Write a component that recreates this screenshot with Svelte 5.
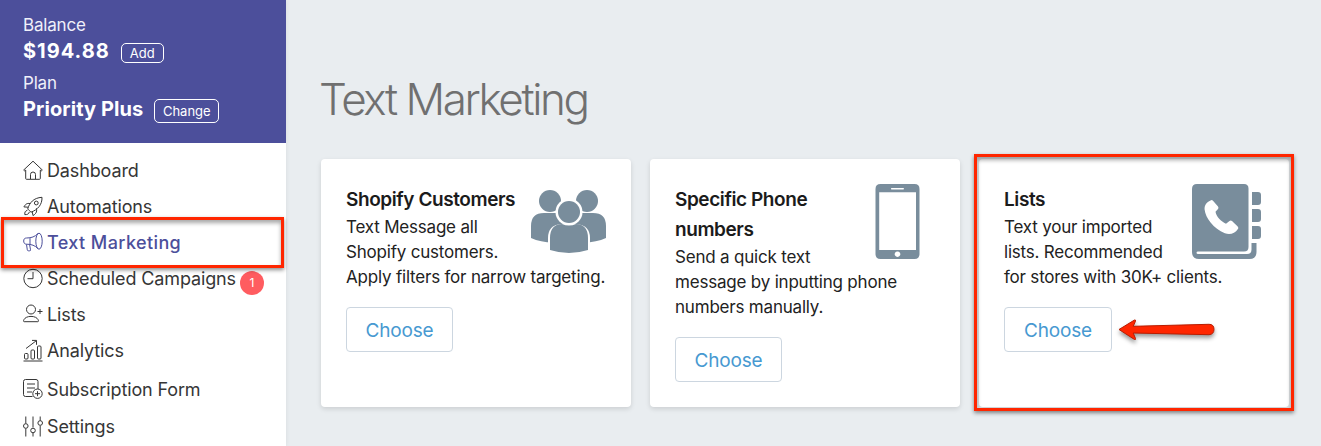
<script>
	/** @type {{ label: string, icon: string, active?: boolean, badge?: number }[]} */
	const NAV = [
		{ label: 'Dashboard', icon: 'home' },
		{ label: 'Automations', icon: 'rocket' },
		{ label: 'Text Marketing', icon: 'megaphone', active: true },
		{ label: 'Scheduled Campaigns', icon: 'clock', badge: 1 },
		{ label: 'Lists', icon: 'user' },
		{ label: 'Analytics', icon: 'chart' },
		{ label: 'Subscription Form', icon: 'form' },
		{ label: 'Settings', icon: 'sliders' }
	];

	const CARDS = [
		{
			icon: 'people',
			title: ['Shopify Customers'],
			text: ['Text Message all', 'Shopify customers.', 'Apply filters for narrow targeting.']
		},
		{
			icon: 'phone',
			title: ['Specific Phone', 'numbers'],
			text: ['Send a quick text', 'message by inputting phone', 'numbers manually.']
		},
		{
			icon: 'book',
			title: ['Lists'],
			text: ['Text your imported', 'lists. Recommended', 'for stores with 30K+ clients.'],
			marked: true
		}
	];
</script>

<div class="app">
	<aside class="sidebar">
		<div class="account">
			<div class="caption">Balance</div>
			<div class="line balance"><strong>$194.88</strong><button class="pill">Add</button></div>
			<div class="caption plan-caption">Plan</div>
			<div class="line plan"><strong>Priority Plus</strong><button class="pill big">Change</button></div>
		</div>

		<nav>
			{#each NAV as item}
				<a class="item {item.icon}" class:active={item.active} href="#top">
					<svg class="icon" viewBox="0 0 20 22" aria-hidden="true">
						{#if item.icon === 'home'}
							<path d="M.7 11 10 2.2l9.3 8.8-1 .9-1-.8v8.4q0 .8-.8.8H3.5q-.8 0-.8-.8v-8.4l-1 .8zM7.5 20v-4.5a2.5 2.5 0 0 1 5 0V20" />
						{:else if item.icon === 'rocket'}
							<path d="M6.2 15.5 4.7 14C6.4 8 10.4 2.8 19 2.3c.3 7.500-4.500 12.500-11 14.900zM7.200 8.600C3.500 7.700 2 10 .9 11.900l4.200.3M13.400 13.300c1 4-1 5.800-3.400 7.300l-.8-4M4.300 15.500C2.300 15.500 1.500 17.500 1.800 19.600c2.200.2 4.200-.5 4.500-2.600" />
							<circle cx="13.300" cy="8" r="1.900" />
						{:else if item.icon === 'megaphone'}
							<path d="M15 2.500C12 5.700 8.500 7 3.500 7 1.500 7 .7 8.200 .7 10s.8 3.200 2.800 3.200c5 0 8.500 1.200 11.500 4.500M7 7.200v5.900M3.500 13.400l.8 5.400q.2 1 1.100 1h1.300q1 0 .8-1l-.9-5.300" />
							<ellipse cx="16" cy="10.200" rx="3.200" ry="8" />
						{:else if item.icon === 'clock'}
							<circle cx="10" cy="11.500" r="9.200" />
							<path d="M10 5v6.700H4.500" />
						{:else if item.icon === 'user'}
							<circle cx="8" cy="6.500" r="4.500" />
							<path d="M1.200 18.700c-.8 0-.8-1-.3-2 1-2 3.600-3.300 7.100-3.300s6.100 1.300 7.100 3.300c.5 1 .5 2-.3 2zM14.500 8.500h5M17 6v5" />
						{:else if item.icon === 'chart'}
							<path d="M.5 22h19M3 9.500 13.300 1.700M9 1.400h4.500v4.400" />
							<rect x="1.500" y="14.500" width="3.500" height="5.500" rx="1" />
							<rect x="8" y="11" width="3.500" height="9" rx="1" />
							<rect x="14.500" y="7" width="3.500" height="13" rx="1" />
						{:else if item.icon === 'form'}
							<path d="M9.500 18.500h-7a2 2 0 0 1-2-2v-13a2 2 0 0 1 2-2H13a2 2 0 0 1 2 2V11M4 6h8M4 10h8M4 14h5M14.500 13.200v5M12 15.700h5" />
							<circle cx="14.500" cy="15.700" r="4.700" />
						{:else}
							<path d="M2.800 1.500v7M2.800 13.500v8M10 1.500v11M10 17.500v4M17.200 1.500v4.200M17.200 10.700v10.800" />
							<circle cx="2.800" cy="11" r="2.300" />
							<circle cx="10" cy="15.500" r="2.300" />
							<circle cx="17.200" cy="8" r="2.300" />
						{/if}
					</svg>
					<span class="label">{item.label}</span>
					{#if item.badge}<span class="badge">{item.badge}</span>{/if}
					{#if item.active}<span class="frame nav-frame"></span>{/if}
				</a>
			{/each}
		</nav>
	</aside>

	<main>
		<h1>Text Marketing</h1>
		<div class="cards">
			{#each CARDS as card}
				<section class="card">
					<svg class="art" viewBox="0 0 75 75" aria-hidden="true">
						{#if card.icon === 'people'}
							<g class="crowd">
								<circle cx="19" cy="17" r="11" />
								<circle cx="56" cy="17" r="11" />
								<path d="M0 54V42q0-13 13-13h12q13 0 13 13v15Q15 61 0 54zM75 54V42q0-13-13-13H50q-13 0-13 13v15q23 4 38-3z" />
								<path class="cut" d="M17 67V54q0-13 13-14h15q14 1 14 14v13z" />
								<circle class="cut" cx="38" cy="28" r="13.500" />
								<circle cx="38" cy="28" r="11" />
								<path d="M19 66V54q0-13.500 12-14 7 3 14 0 12 .5 12 14v12q-19 6-38 0z" />
							</g>
						{:else if card.icon === 'phone'}
							<path fill-rule="evenodd" d="M20.500 0h34q5 0 5 5v65q0 5-5 5h-34q-5 0-5-5V5q0-5 5-5zM19.200 8.300V66h36.800V8.300zM31.700 3.900a.8.8 0 0 0 0 1.600h11.500a.8.8 0 0 0 0-1.600zM37.500 67.400a2.800 2.800 0 1 0 .01 0z" />
						{:else}
							<path d="M8 0h47q4.500 0 4.500 4.500v58.500q0 4.500-4.500 4.500H9q-1.500 0-1.500 1.200T9 70h49q4.500 0 4.500-4.500V59H67.500v9q0 7-7 7H10q-7 0-7-7V5q0-5 5-5zM63 8h6q3 0 3 3v7q0 3-3 3h-6zM63 25h6q3 0 3 3v7q0 3-3 3h-6zM63 42h6q3 0 3 3v7q0 3-3 3h-6z" />
							<path class="cut" d="M21.500 16.500q1.300-1 2.500.3l5 5.700q1 1.500 0 2.600l-2.500 2.700c1 5.400 5.400 9.500 10.500 12l3.500-2.700q1.200-1.100 2.500 0l5.700 5.300q1.300 1.500.2 2.600c-3 4.500-7.900 6.300-13 4.300C24.500 44.700 16.500 34 15.600 25.500c-.3-4.500 2-7 5.900-9z" />
						{/if}
					</svg>
					<h2>{#each card.title as row, i}{#if i}<br />{/if}{row}{/each}</h2>
					<p>{#each card.text as row}<span class="row">{row}</span><br />{/each}</p>
					<button class="choose" class:wide={card.marked}>Choose</button>
					{#if card.marked}
						<span class="frame card-frame"></span>
						<svg class="arrow" viewBox="0 0 104 30" aria-hidden="true">
							<path d="M2 12.500 17.500 3q1.500-.3 1 1.200L16.200 9.300 92 7.300q5 0 5 5t-5 5.400L16.200 16l2.300 5.500q.3 1.500-1 1z" />
						</svg>
					{/if}
				</section>
			{/each}
		</div>
	</main>
</div>

<style>
	:global(body) { margin: 0; }

	.app {
		display: flex;
		width: 1321px;
		height: 446px;
		overflow: hidden;
		background: #e9edf0;
		font-family: Inter, "Liberation Sans", sans-serif;
	}
	button {
		box-sizing: border-box;
		background: none;
		font-family: inherit;
		padding: 0;
	}

	.sidebar {
		width: 286px;
		flex: none;
		background: #fff;
		box-shadow: 0 0 5px rgba(0, 0, 0, 0.08);
	}
	.account {
		box-sizing: border-box;
		height: 143px;
		padding: 13px 23px 0;
		background: #4c4f9b;
		color: #fff;
	}
	.caption {
		height: 24px;
		line-height: 24px;
		font-size: 17px;
		letter-spacing: -0.2px;
		color: #f0f0fa;
	}
	.plan-caption { margin-top: 6px; }
	.line { display: flex; height: 28px; }
	.line strong {
		line-height: 28px;
		font-size: 20px;
		font-weight: 700;
		letter-spacing: 0.08px;
	}
	.balance strong { letter-spacing: 1px; }
	.pill {
		width: 43px;
		height: 20px;
		margin: 6px 0 0 11px;
		border: 1px solid #fff;
		border-radius: 5px;
		color: #fff;
		font-size: 13px;
		line-height: 17px;
	}
	.pill.big {
		width: 65px;
		height: 24px;
		margin-top: 4px;
		line-height: 22px;
	}

	nav { padding-top: 9px; }
	.item {
		position: relative;
		display: flex;
		align-items: center;
		height: 36px;
		padding-left: 23px;
		color: #363636;
		text-decoration: none;
	}
	.item.form { margin-top: 3px; }
	.item.sliders { margin-top: 1px; }
	.item.active { color: #4c4f9b; }
	.icon {
		width: 20px;
		height: 22px;
		flex: none;
		margin-right: 4px;
		overflow: visible;
		fill: none;
		stroke: currentColor;
		stroke-width: 1;
	}
	.label {
		padding-top: 2px;
		font-size: 18px;
		line-height: 34px;
		letter-spacing: -0.13px;
		white-space: nowrap;
	}
	.active .label {
		font-weight: 500;
		letter-spacing: 0.4px;
	}
	.badge {
		width: 24px;
		height: 24px;
		margin: 9px 0 0 4px;
		border-radius: 50%;
		background: #ff5c60;
		color: #fff;
		font-size: 12px;
		line-height: 24px;
		text-align: center;
	}

	/* callout frames drawn over the page */
	.frame {
		position: absolute;
		z-index: 2;
		box-sizing: border-box;
		border: 3px solid #ff2600;
		box-shadow: 0 2px 4px rgba(0, 0, 0, 0.45), inset 0 3px 4px rgba(0, 0, 0, 0.35);
	}
	.nav-frame { left: 1px; top: -7px; width: 283px; height: 51px; }
	.card-frame { left: -5px; top: -5px; width: 320px; height: 257px; }

	main { padding: 74px 0 0 35px; }
	h1 {
		margin: 0 0 35px -2px;
		height: 50px;
		line-height: 50px;
		font-size: 44px;
		font-weight: 300;
		letter-spacing: -2.4px;
		color: #707070;
		white-space: nowrap;
	}
	.cards { display: flex; gap: 19px; }
	.card {
		position: relative;
		box-sizing: border-box;
		width: 310px;
		height: 248px;
		padding: 25px;
		border-radius: 4px;
		background: #fff;
		box-shadow: 0 2px 5px rgba(0, 0, 0, 0.13);
	}
	.art {
		float: right;
		width: 75px;
		height: 75px;
		fill: #798d9c;
	}
	.cut { fill: #fff; }
	h2 {
		margin: 0;
		padding-top: 1px;
		font-size: 19px;
		line-height: 30px;
		font-weight: 600;
		letter-spacing: -0.42px;
		color: #1b1b1b;
	}
	p {
		margin: 0 0 17px;
		font-size: 17px;
		line-height: 25px;
		letter-spacing: -0.2px;
		color: #222;
		white-space: nowrap;
	}
	.choose {
		display: block;
		width: 107px;
		height: 45px;
		padding-top: 1px;
		border: 1px solid #ccd6e0;
		border-radius: 4px;
		color: #4799d1;
		font-size: 19px;
		letter-spacing: -0.2px;
	}
	.choose.wide { width: 108px; }
	.arrow {
		position: absolute;
		left: 138px;
		top: 158px;
		width: 104px;
		height: 30px;
		fill: #ff2600;
		stroke: #b81c00;
		stroke-width: 1;
		filter: drop-shadow(0 3px 2px rgba(0, 0, 0, 0.4));
	}
</style>
